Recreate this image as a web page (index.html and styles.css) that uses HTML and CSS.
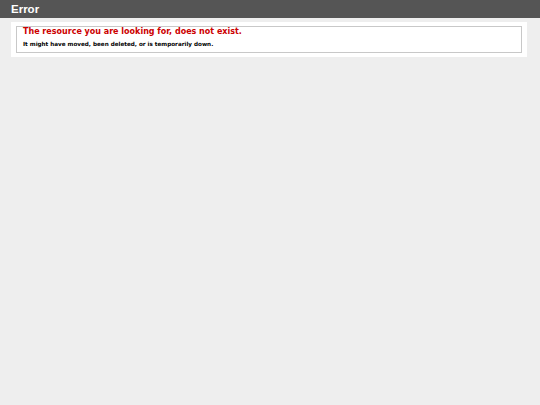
FILE: index.html
```html
<!DOCTYPE html>
<html>
<head>
<meta charset="utf-8">
<title>404 - File or directory not found.</title>
<link rel="stylesheet" href="styles.css">
</head>
<body>
<div class="header"><h1>Error</h1></div>
<div class="content">
  <div class="container">
    <fieldset class="box">
      <h2>The resource you are looking for, does not exist.</h2>
      <h3>It might have moved, been deleted, or is temporarily down.</h3>
    </fieldset>
  </div>
</div>
</body>
</html>
```
FILE: styles.css
```css
body {
  margin: 0;
  background: #eeeeee;
  font-family: "DejaVu Sans", Verdana, sans-serif;
}
.header {
  height: 18px;
  padding: 0 11px;
  background: #555555;
  color: #ffffff;
}
.header h1 {
  margin: 0;
  font-family: "Liberation Sans", Arial, sans-serif;
  font-size: 11.5px;
  line-height: 19px;
  font-weight: bold;
  color: #ffffff;
}
.content {
  margin-left: 11px;
}
.container {
  box-sizing: border-box;
  width: 516px;
  margin-top: 4px;
  padding: 4px 5px;
  background: #ffffff;
}
.box {
  box-sizing: border-box;
  height: 27px;
  margin: 0;
  padding: 0 6px;
  border: 1px solid #c8c8c8;
}
.box h2 {
  margin: 0;
  font-size: 8px;
  line-height: 10px;
  font-weight: bold;
  color: #cc0000;
}
.box h3 {
  margin: 3px 0 0 0;
  font-size: 5.65px;
  line-height: 8px;
  font-weight: bold;
  color: #000000;
}
```
